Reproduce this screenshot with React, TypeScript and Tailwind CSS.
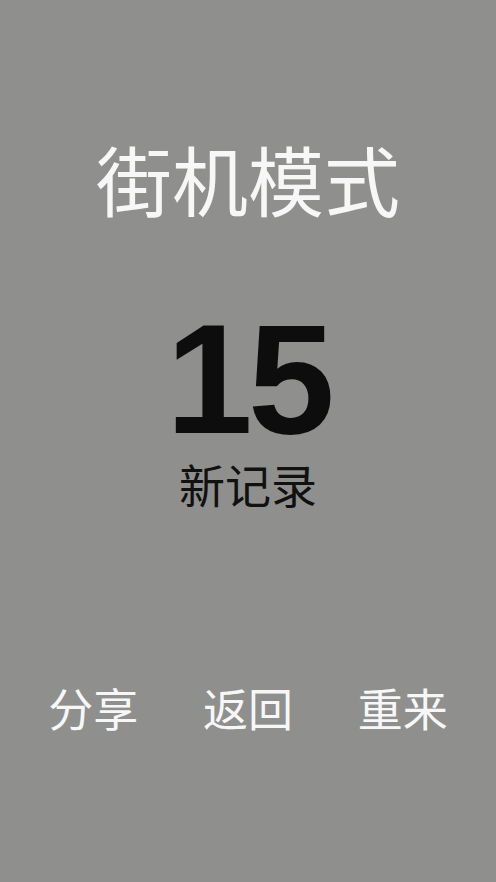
export default function App() {
    const actions = ['分享', '返回', '重来'];

    return (
        <div className="h-[882px] w-full bg-[#8f908e] flex flex-col items-center overflow-hidden font-['Liberation_Sans','Noto_Sans_CJK_SC',sans-serif]">
            <h1 className="mt-[140px] text-[76px] leading-none text-[#f7f7f7] font-normal font-['Noto_Sans_CJK_SC',sans-serif]">
                街机模式
            </h1>

            {/* score + record label */}
            <div className="mt-[98px] text-[156px] leading-[130px] font-bold tracking-[-0.03em] text-[#0d0d0d] font-['Liberation_Sans',sans-serif]">
                15
            </div>
            <div className="mt-[16px] text-[46px] leading-none text-[#111] font-['Noto_Sans_CJK_SC',sans-serif]">
                新记录
            </div>

            <div className="mt-[179px] w-full px-4 grid grid-cols-3">
                {actions.map((label) => (
                    <button
                        key={label}
                        className="text-[45px] leading-none text-[#f7f7f7] text-center font-['Noto_Sans_CJK_SC',sans-serif]"
                    >
                        {label}
                    </button>
                ))}
            </div>
        </div>
    );
}
